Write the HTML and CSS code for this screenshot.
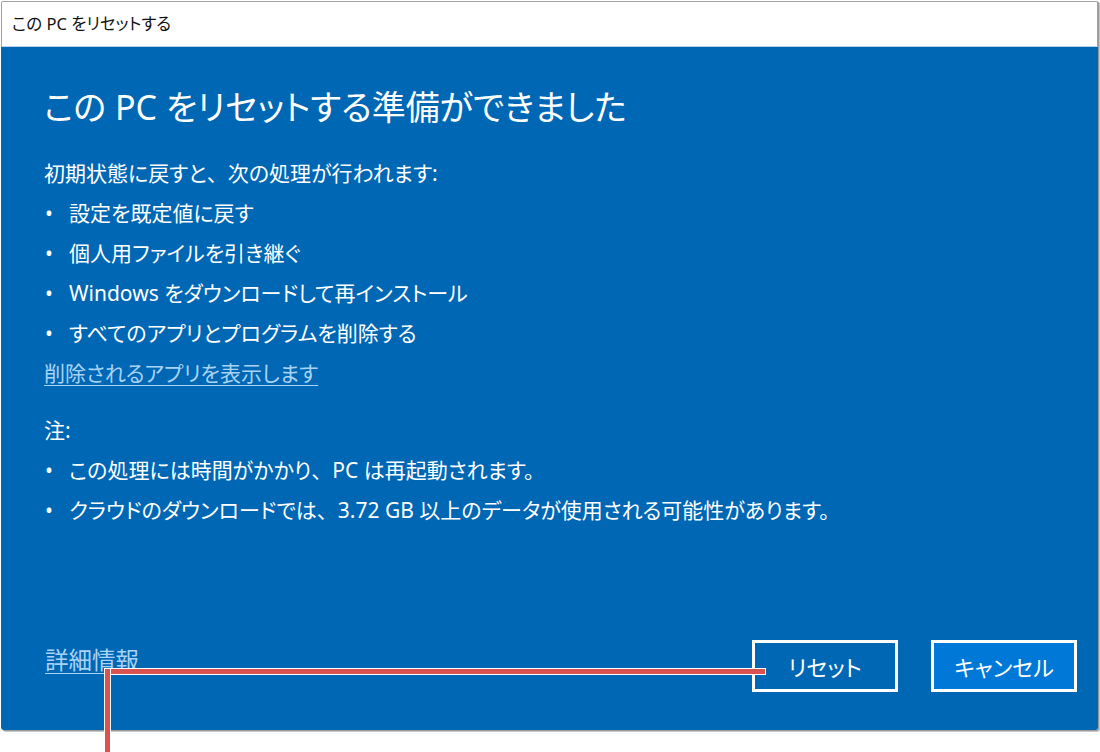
FILE: index.html
```html
<!DOCTYPE html>
<html lang="ja">
<head>
<meta charset="utf-8">
<title>この PC をリセットする</title>
<link rel="stylesheet" href="styles.css">
</head>
<body>
<div class="window">
  <div class="titlebar">この PC をリセットする</div>
  <div class="dialog">
    <h1 class="heading">この PC をリセットする準備ができました</h1>
    <p class="line">初期状態に戻すと<span class="fw">、</span>次の処理が行われます:</p>
    <ul class="list">
      <li>設定を既定値に戻す</li>
      <li>個人用ファイルを引き継ぐ</li>
      <li>Windows をダウンロードして再インストール</li>
      <li>すべてのアプリとプログラムを削除する</li>
    </ul>
    <a class="link" href="#">削除されるアプリを表示します</a>
    <p class="line note">注:</p>
    <ul class="list">
      <li>この処理には時間がかかり<span class="fw">、</span>PC は再起動されます。</li>
      <li>クラウドのダウンロードでは<span class="fw">、</span>3.72 GB 以上のデータが使用される可能性があります。</li>
    </ul>
    <div class="footer">
      <a class="link more" href="#">詳細情報</a>
      <div class="buttons">
        <button class="btn">リセット</button>
        <button class="btn primary">キャンセル</button>
      </div>
    </div>
  </div>
</div>
<div class="callout-h"></div>
<div class="callout-v"></div>
</body>
</html>
```
FILE: styles.css
```css
html, body {
  margin: 0;
  padding: 0;
  background: #ffffff;
  width: 1100px;
  height: 752px;
  overflow: hidden;
}
body {
  font-family: "Noto Sans", "Noto Sans CJK JP", sans-serif;
  font-feature-settings: "palt" 1;
  position: relative;
}
.fw {
  font-feature-settings: normal;
}
.window {
  margin: 1px 0 0 1px;
  width: 1097px;
  height: 729px;
  display: flex;
  flex-direction: column;
  box-shadow: 1px 1px 0 #9a9a9a, 2px 2px 0 #c8c8c8;
  border-radius: 0 0 3px 3px;
}
.titlebar {
  height: 44px;
  border: 1px solid #a0a0a0;
  border-bottom: 1px solid #b9d4ea;
  background: #ffffff;
  color: #111;
  font-size: 16.5px;
  line-height: 44px;
  padding-left: 10px;
  border-radius: 2px 2px 0 0;
}
.dialog {
  flex: 1;
  background: #0067b4;
  color: #ffffff;
  display: flex;
  flex-direction: column;
  padding: 80px 21px 38px 43px;
  border-radius: 0 0 3px 3px;
}
.heading {
  margin: 0;
  font-weight: normal;
  font-size: 34px;
  line-height: 40px;
  margin-top: -40px;
  margin-bottom: 26px;
}
.line {
  margin: 0;
  font-size: 21px;
  line-height: 40px;
}
.note {
  margin-top: 17px;
}
.list {
  list-style: none;
  margin: 0;
  padding: 0;
}
.list li {
  font-size: 21px;
  line-height: 40px;
  padding-left: 25px;
  position: relative;
}
.list li::before {
  content: "•";
  position: absolute;
  left: 1px;
  top: 0;
}
.link {
  color: #a9d3f5;
  font-size: 21px;
  line-height: 40px;
  text-decoration: underline;
  text-underline-offset: 4px;
  text-decoration-thickness: 1px;
  align-self: flex-start;
}
.footer {
  margin-top: auto;
  display: flex;
  align-items: center;
  justify-content: space-between;
}
.more {
  margin-left: 1px;
  font-size: 23.5px;
}
.buttons {
  display: flex;
  gap: 33px;
}
.btn {
  width: 146px;
  height: 52px;
  border: 3px solid #ffffff;
  background: transparent;
  color: #ffffff;
  font-family: inherit;
  font-feature-settings: "palt" 1;
  font-size: 22px;
  padding: 0;
}
.btn.primary {
  background: #0078d7;
}
.callout-h {
  position: absolute;
  left: 104px;
  top: 668px;
  width: 660px;
  height: 5px;
  background: #db5350;
  border: 1px solid #ffffff;
}
.callout-v {
  position: absolute;
  left: 104px;
  top: 668px;
  width: 5px;
  height: 90px;
  background: #db5350;
  border: 1px solid #ffffff;
  border-bottom: none;
}
```
